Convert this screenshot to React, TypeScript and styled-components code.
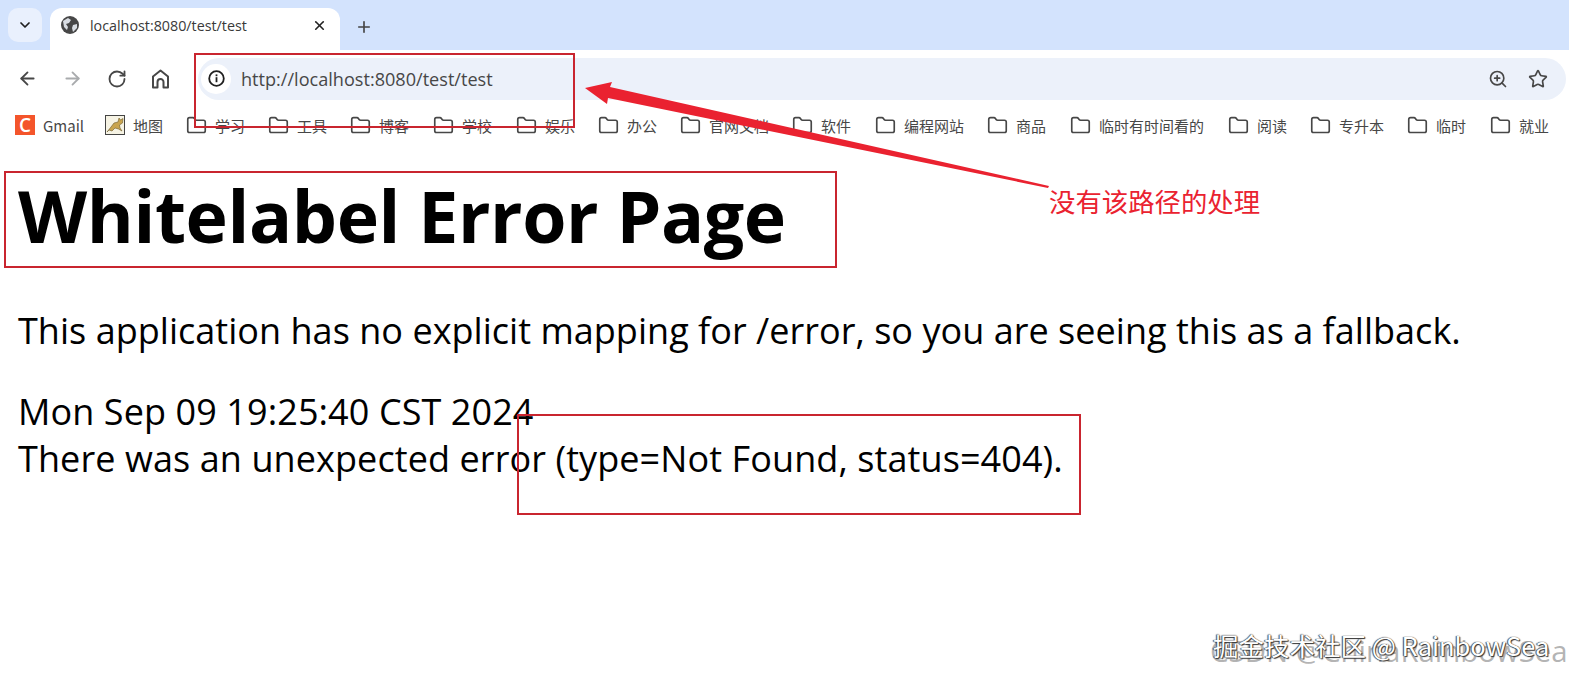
import React from "react";
import styled, { createGlobalStyle } from "styled-components";
import { ArrowLeft, ArrowRight, RotateCw, ZoomIn, Star, X, Plus, ChevronDown, Folder } from "lucide-react";

const GlobalStyle = createGlobalStyle`
  html, body {
    margin: 0;
    padding: 0;
    background: #fff;
    overflow: hidden;
  }
  body {
    font-family: "Open Sans", "Noto Sans CJK SC", sans-serif;
  }
`;

const Page = styled.div`
  position: relative;
  width: 1569px;
  height: 681px;
  overflow: hidden;
`;

const TabStrip = styled.div`
  height: 50px;
  background: #d3e3fd;
  display: flex;
  align-items: flex-end;
  padding-left: 8px;
`;

const TabMenu = styled.div`
  width: 34px;
  height: 34px;
  margin-bottom: 8px;
  border-radius: 10px;
  background: #e9f0fd;
  display: flex;
  align-items: center;
  justify-content: center;
  color: #1f1f1f;
`;

const Tab = styled.div`
  width: 290px;
  height: 42px;
  margin-left: 8px;
  background: #fff;
  border-radius: 12px 12px 0 0;
  display: flex;
  align-items: center;
  padding: 0 13px 8px 11px;
  box-sizing: border-box;
  font-size: 14.3px;
  color: #3a3a3a;
`;

const TabTitle = styled.span`
  margin-left: 11px;
  flex: 1;
`;

const NewTab = styled.div`
  margin: 0 0 14px 15px;
  color: #444;
  display: flex;
`;

const Toolbar = styled.div`
  height: 55px;
  background: #fff;
  display: flex;
  align-items: center;
  padding: 1px 3px 0 17px;
  border-radius: 12px 0 0 0;
`;

const NavButton = styled.div<{ $dim?: boolean; $gap?: number }>`
  display: flex;
  margin-right: ${(p) => p.$gap ?? 24}px;
  color: ${(p) => (p.$dim ? "#a9abad" : "#474747")};
`;

const AddressBar = styled.div`
  flex: 1;
  height: 42px;
  border-radius: 21px;
  background: #ecf1fa;
  display: flex;
  align-items: center;
  margin-left: -3px;
  padding: 0 18px 0 3px;
`;

const SiteInfo = styled.div`
  width: 30px;
  height: 30px;
  border-radius: 50%;
  background: #fff;
  display: flex;
  align-items: center;
  justify-content: center;
  color: #1f1f1f;
`;

const Url = styled.div`
  flex: 1;
  margin-left: 10px;
  font-size: 18.1px;
  color: #474747;
`;

const BarIcons = styled.div`
  display: flex;
  gap: 20px;
  color: #474747;
`;

const Bookmarks = styled.div`
  height: 38px;
  display: flex;
  align-items: center;
  padding-left: 15px;
  color: #474747;
  background: #fff;
`;

const Bookmark = styled.div<{ $width: number }>`
  display: flex;
  align-items: center;
  gap: 8px;
  width: ${(p) => p.$width}px;
  flex: none;
  white-space: nowrap;
`;

const BookmarkLabel = styled.span`
  font-size: 15px;
  font-family: "Noto Sans CJK SC", "Open Sans", sans-serif;
`;

const GmailIcon = styled.div`
  width: 20px;
  height: 20px;
  background: #f4552b;
  color: #fff;
  font-size: 19px;
  font-weight: 600;
  line-height: 20px;
  text-align: center;
`;

const Main = styled.main`
  padding: 23px 0 0 18px;
  color: #000;
`;

const Heading = styled.h1`
  margin: 0;
  font-size: 71.6px;
  line-height: 96px;
  font-weight: 700;
  white-space: nowrap;
  letter-spacing: -0.4px;
`;

const Paragraph = styled.p`
  margin: 44px 0 0;
  font-size: 36px;
  line-height: 47px;
  letter-spacing: 0.03px;
  white-space: nowrap;
`;

const ErrorBlock = styled.div`
  margin-top: 34px;
  font-size: 36px;
  line-height: 47px;
  letter-spacing: 0.09px;
  white-space: nowrap;
`;

const RedBox = styled.div<{ $x: number; $y: number; $w: number; $h: number }>`
  position: absolute;
  left: ${(p) => p.$x}px;
  top: ${(p) => p.$y}px;
  width: ${(p) => p.$w}px;
  height: ${(p) => p.$h}px;
  box-sizing: border-box;
  border: 2px solid #c9252f;
`;

const ArrowOverlay = styled.svg`
  position: absolute;
  left: 0;
  top: 0;
  pointer-events: none;
`;

const Note = styled.div`
  position: absolute;
  left: 1049px;
  top: 183px;
  font-family: "Noto Sans CJK SC", sans-serif;
  font-size: 26.4px;
  line-height: 36px;
  color: #ea2230;
  white-space: nowrap;
`;

const WatermarkBack = styled.div`
  position: absolute;
  left: 1210px;
  top: 632px;
  font-size: 29.4px;
  line-height: 38px;
  color: rgba(130, 130, 130, 0.6);
  white-space: nowrap;
`;

const WatermarkFront = styled.div`
  position: absolute;
  left: 1213px;
  top: 627px;
  font-family: "Noto Sans CJK SC", "Open Sans", sans-serif;
  font-size: 25.5px;
  line-height: 36px;
  color: #fff;
  white-space: nowrap;
  text-shadow: 0 0 1px #333, 1px 1px 1px #333, -1px 0 1px #555;
`;

const bookmarks = [
  { label: "学习", width: 82 },
  { label: "工具", width: 82 },
  { label: "博客", width: 83 },
  { label: "学校", width: 83 },
  { label: "娱乐", width: 82 },
  { label: "办公", width: 82 },
  { label: "官网文档", width: 112 },
  { label: "软件", width: 83 },
  { label: "编程网站", width: 112 },
  { label: "商品", width: 83 },
  { label: "临时有时间看的", width: 158 },
  { label: "阅读", width: 82 },
  { label: "专升本", width: 97 },
  { label: "临时", width: 83 },
  { label: "就业", width: 79 },
];

const TomcatIcon = () => (
  <svg width="20" height="20" viewBox="0 0 20 20">
    <rect x="0.5" y="0.5" width="19" height="19" fill="#f6f3e4" stroke="#444" />
    <path d="M2 17 L6 12 L9 8 L13 7 L14 3 L15.5 5 L18 3.5 L17.5 8 L14.5 10 L15 13 L17 16 L13.5 14 L10 13 L7 16 L4 15 Z" fill="#c9a44e" stroke="#6b5a2a" strokeWidth="0.6" />
  </svg>
);

const GlobeIcon = () => (
  <svg width="18" height="18" viewBox="0 0 18 18">
    <circle cx="9" cy="9" r="9" fill="#474747" />
    <path d="M2 5 L7 2 L10 4 L8 7 L5 8 L7 11 L6 14 L3 11 Z M12 9 L16 8 L16 12 L12 16 L11 12 Z" fill="#d9dde3" />
  </svg>
);

const HomeIcon = () => (
  <svg width="19" height="20" viewBox="0 0 19 20" fill="none" stroke="currentColor" strokeWidth="2" strokeLinejoin="round">
    <path d="M2 18.5 V7.5 L9.5 1.5 L17 7.5 V18.5 H12.5 V13 A3 3 0 0 0 6.5 13 V18.5 Z" />
  </svg>
);

const InfoIcon = () => (
  <svg width="17" height="17" viewBox="0 0 17 17">
    <circle cx="8.5" cy="8.5" r="7.3" fill="none" stroke="currentColor" strokeWidth="1.8" />
    <rect x="7.6" y="7.2" width="1.8" height="5" fill="currentColor" />
    <rect x="7.6" y="4.4" width="1.8" height="1.8" fill="currentColor" />
  </svg>
);

export default function App() {
  return (
    <Page>
      <GlobalStyle />
      <TabStrip>
        <TabMenu>
          <ChevronDown size={16} strokeWidth={2.6} />
        </TabMenu>
        <Tab>
          <GlobeIcon />
          <TabTitle>localhost:8080/test/test</TabTitle>
          <X size={15} strokeWidth={2.6} color="#222" />
        </Tab>
        <NewTab>
          <Plus size={18} strokeWidth={2.2} />
        </NewTab>
      </TabStrip>
      <Toolbar>
        <NavButton><ArrowLeft size={21} strokeWidth={2.1} /></NavButton>
        <NavButton $dim><ArrowRight size={21} strokeWidth={2.1} /></NavButton>
        <NavButton><RotateCw size={20} strokeWidth={2.2} /></NavButton>
        <NavButton $gap={31}><HomeIcon /></NavButton>
        <AddressBar>
          <SiteInfo><InfoIcon /></SiteInfo>
          <Url>http://localhost:8080/test/test</Url>
          <BarIcons>
            <ZoomIn size={20} />
            <Star size={20} />
          </BarIcons>
        </AddressBar>
      </Toolbar>
      <Bookmarks>
        <Bookmark $width={90}>
          <GmailIcon>C</GmailIcon>
          <BookmarkLabel>Gmail</BookmarkLabel>
        </Bookmark>
        <Bookmark $width={81}>
          <TomcatIcon />
          <BookmarkLabel>地图</BookmarkLabel>
        </Bookmark>
        {bookmarks.map((b) => (
          <Bookmark key={b.label} $width={b.width}>
            <Folder size={21} strokeWidth={1.9} />
            <BookmarkLabel>{b.label}</BookmarkLabel>
          </Bookmark>
        ))}
      </Bookmarks>
      <Main>
        <Heading>Whitelabel Error Page</Heading>
        <Paragraph>This application has no explicit mapping for /error, so you are seeing this as a fallback.</Paragraph>
        <ErrorBlock>
          <div>Mon Sep 09 19:25:40 CST 2024</div>
          <div>There was an unexpected error (type=Not Found, status=404).</div>
        </ErrorBlock>
      </Main>

      <RedBox $x={194} $y={53} $w={381} $h={75} />
      <RedBox $x={4} $y={171} $w={833} $h={97} />
      <RedBox $x={517} $y={414} $w={564} $h={101} />
      <ArrowOverlay width="1569" height="681" viewBox="0 0 1569 681">
        <polygon points="585,88 612,82 610,87 1049,186 1048,188 608,98 607,104" fill="#ea2230" />
      </ArrowOverlay>
      <Note>没有该路径的处理</Note>

      <WatermarkBack>CSDN @ChinaRainbowSea</WatermarkBack>
      <WatermarkFront>掘金技术社区 @ RainbowSea</WatermarkFront>
    </Page>
  );
}
